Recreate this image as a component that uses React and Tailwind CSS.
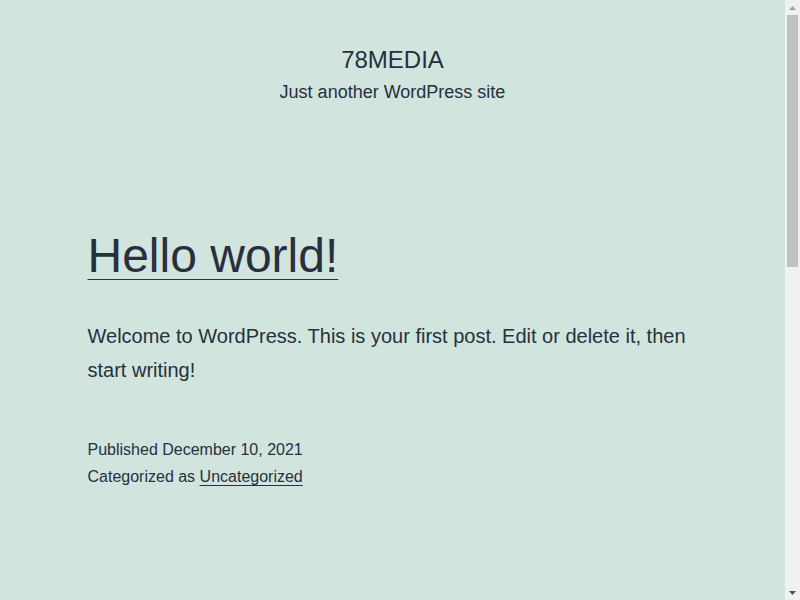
function Scrollbar() {
  return (
    <div className="flex w-[15px] shrink-0 flex-col items-center bg-[#f1f1f1]">
      <div className="flex h-[15px] w-full items-center justify-center">
        <svg width="7" height="4" viewBox="0 0 7 4">
          <path d="M3.5 0 L7 4 L0 4 Z" fill="#a3a3a3" />
        </svg>
      </div>
      <div className="h-[252px] w-[11px] bg-[#c1c1c1]" />
      <div className="flex-1" />
      <div className="flex h-[15px] w-full items-center justify-center">
        <svg width="7" height="4" viewBox="0 0 7 4">
          <path d="M0 0 L7 0 L3.5 4 Z" fill="#505050" />
        </svg>
      </div>
    </div>
  );
}

export default function App() {
  return (
    <div
      className="flex h-[600px] overflow-hidden bg-[#d1e4dd] text-[#28303d]"
      style={{ fontFamily: '"Liberation Sans", Arial, sans-serif' }}
    >
      <div className="min-w-0 flex-1">
        <header className="pt-[43px] text-center">
          <p className="text-[24px] leading-[33.6px] uppercase">78MEDIA</p>
          <p className="mt-[3px] text-[18px] leading-[25.2px]">Just another WordPress site</p>
        </header>

        <main className="mx-auto max-w-[610px] pt-[120px]">
          <h2 className="text-[48px] leading-[62.4px]">
            <a href="#" className="underline decoration-1 underline-offset-[7px]">
              Hello world!
            </a>
          </h2>

          <p className="mt-[32px] text-[20px] leading-[34px]">
            Welcome to WordPress. This is your first post. Edit or delete it, then start writing!
          </p>

          <footer className="mt-[49px] text-[16px] leading-[27.2px]">
            <div>Published December 10, 2021</div>
            <div>
              Categorized as{" "}
              <a href="#" className="underline decoration-1 underline-offset-[3px]">
                Uncategorized
              </a>
            </div>
          </footer>
        </main>
      </div>
      <Scrollbar />
    </div>
  );
}
